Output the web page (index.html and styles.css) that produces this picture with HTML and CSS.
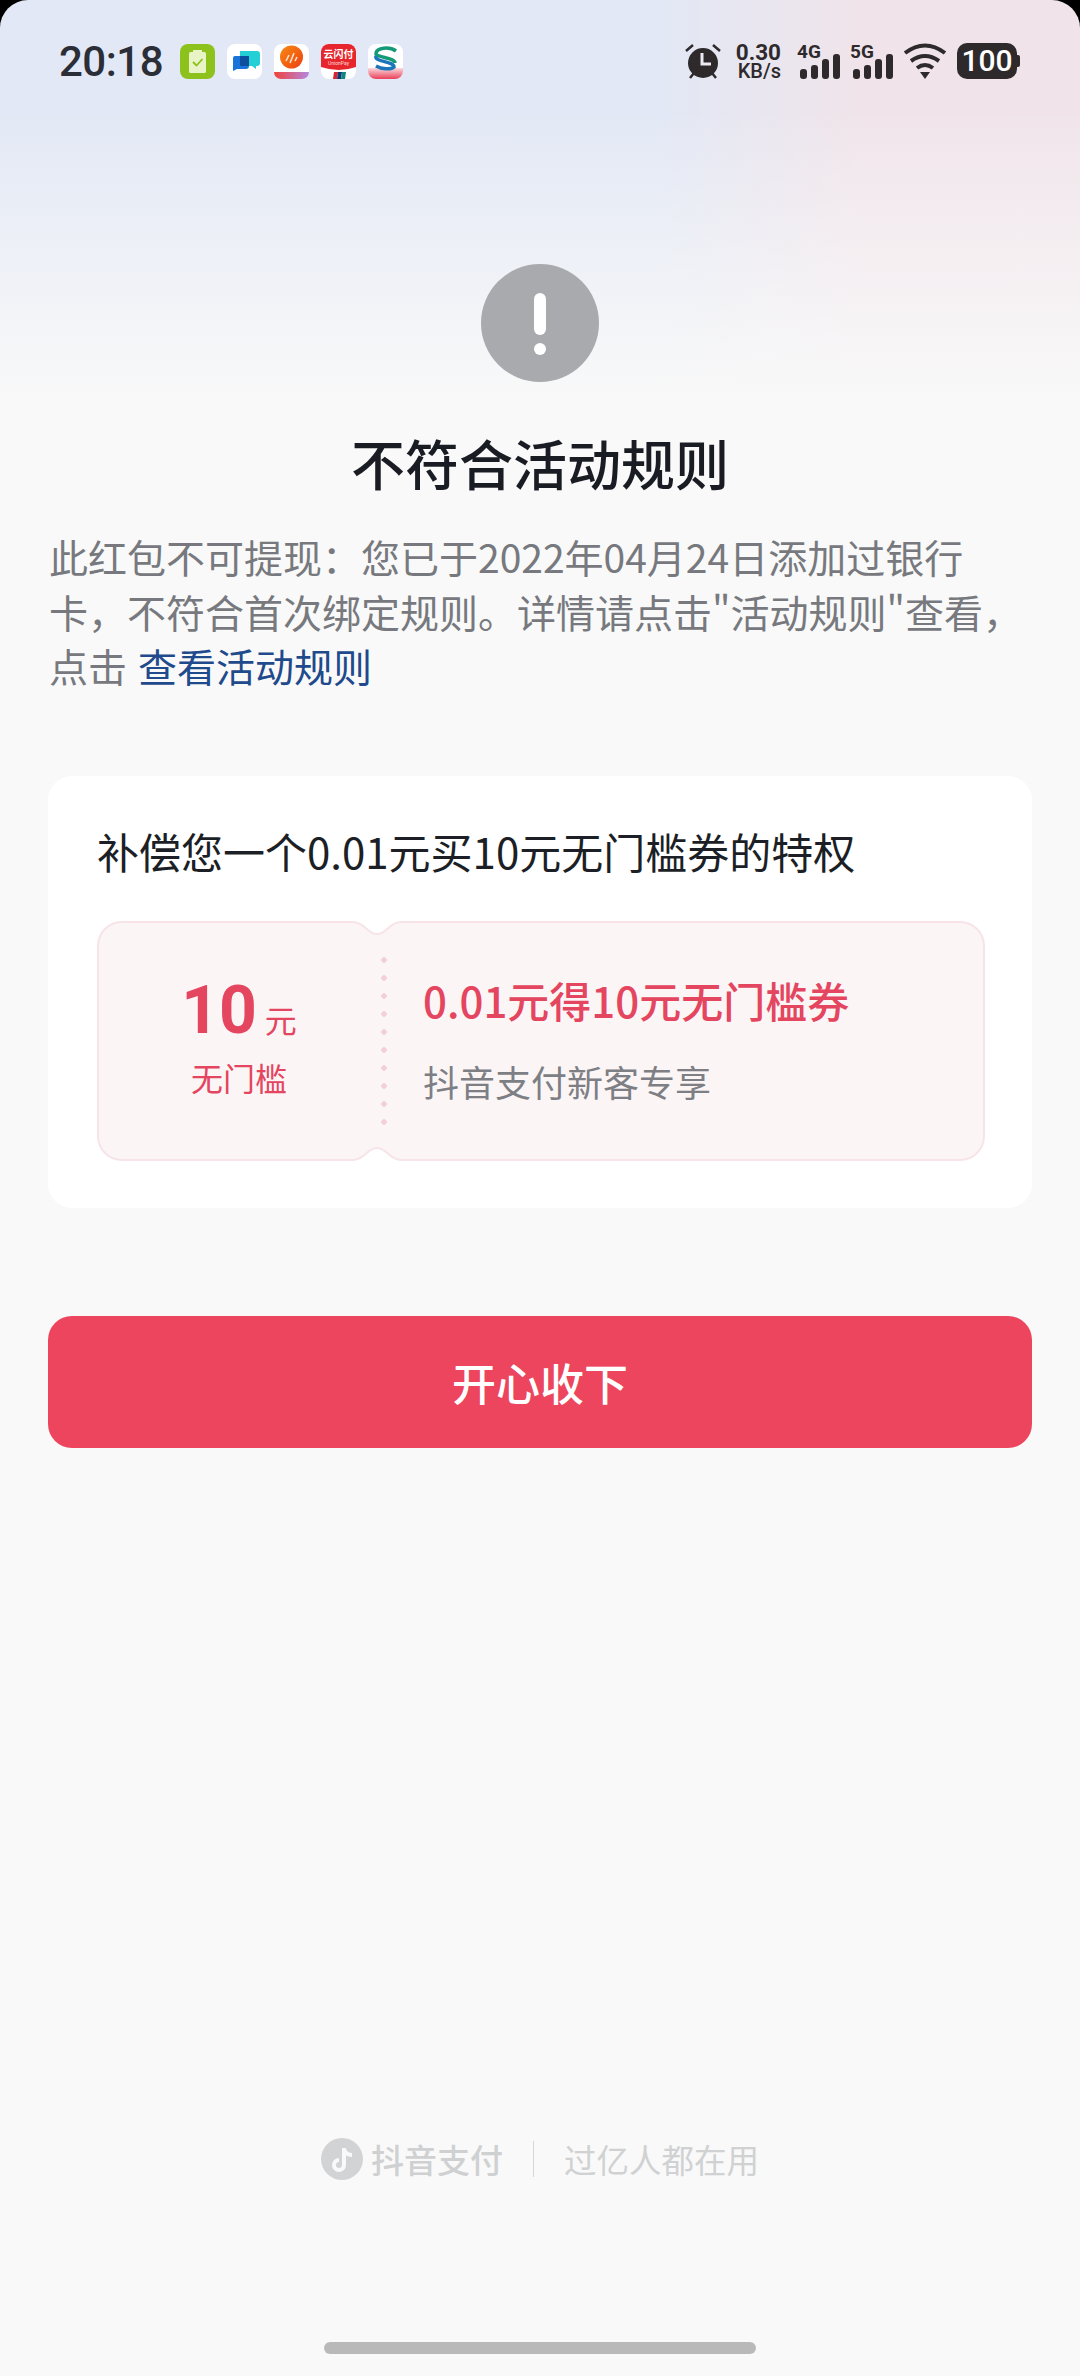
FILE: index.html
```html
<!DOCTYPE html>
<html lang="zh-CN">

<head>
    <meta charset="UTF-8">
    <meta name="viewport" content="width=device-width, initial-scale=1.0">
    <title>不符合活动规则</title>
    <link rel="stylesheet" href="styles.css">
</head>

<body>
    <div class="screen">
        <div class="status-bar">
            <div class="status-left">
                <span class="time">20:18</span>
                <div class="app-icons">
                    <svg class="app-icon" viewBox="0 0 35 35">
                        <rect width="35" height="35" rx="8" fill="#8cc21b" />
                        <rect x="9" y="8" width="17" height="21" rx="1.5" fill="#e8f3c6" />
                        <rect x="13" y="6" width="9" height="4" fill="#e8f3c6" />
                        <path d="M13 18l3.500 3.500 6-6.500" fill="none" stroke="#8cc21b" stroke-width="1.800" />
                    </svg>
                    <svg class="app-icon" viewBox="0 0 35 35">
                        <rect width="35" height="35" rx="8" fill="#fff" />
                        <path d="M13 7h17a3 3 0 0 1 3 3v9a3 3 0 0 1-3 3h-1v3l-4-3H13z" fill="#25cfd6" />
                        <path d="M8 12h14v10a3 3 0 0 1-3 3H10l-4 2V14a2 2 0 0 1 2-2z" fill="#1874d8" />
                        <rect x="13" y="12" width="9" height="10" rx="1" fill="#0d4f9e" />
                    </svg>
                    <svg class="app-icon" viewBox="0 0 35 35">
                        <defs>
                            <linearGradient id="orangeBall" x1="0" y1="0" x2="1" y2="1">
                                <stop offset="0" stop-color="#f78a12" />
                                <stop offset="1" stop-color="#ee3f12" />
                            </linearGradient>
                            <linearGradient id="purpleBand" x1="0" y1="0" x2="1" y2="0">
                                <stop offset="0" stop-color="#f0423c" />
                                <stop offset="1" stop-color="#b587e0" />
                            </linearGradient>
                        </defs>
                        <rect width="35" height="35" rx="8" fill="#fff" />
                        <circle cx="17.500" cy="13" r="11.500" fill="url(#orangeBall)" />
                        <path d="M12 17l3-6M16 19l4-10M21 17l2-4" stroke="#ffe3c8" stroke-width="1.600" />
                        <path d="M0 28h35a7 7 0 0 1-7 7H7a7 7 0 0 1-7-7z" fill="url(#purpleBand)" />
                    </svg>
                    <svg class="app-icon" viewBox="0 0 35 35">
                        <rect width="35" height="35" rx="8" fill="#fff" />
                        <path d="M0 8a8 8 0 0 1 8-8h19a8 8 0 0 1 8 8v15q-17 6-35 0z" fill="#e6262c" />
                        <text class="app-icon-text" x="17.500" y="14" text-anchor="middle">云闪付</text>
                        <text class="app-icon-small" x="17.500" y="21" text-anchor="middle">UnionPay</text>
                        <path d="M13 28h4l-1 7h-4z" fill="#d9232e" />
                        <path d="M17 28h4l-1 7h-4z" fill="#0b3a78" />
                        <path d="M21 28h4l-1 7h-4z" fill="#14857c" />
                    </svg>
                    <svg class="app-icon" viewBox="0 0 35 35">
                        <defs>
                            <linearGradient id="pinkBand" x1="0" y1="0" x2="0" y2="1">
                                <stop offset="0" stop-color="#fbd9dd" />
                                <stop offset="1" stop-color="#e9405a" />
                            </linearGradient>
                        </defs>
                        <rect width="35" height="35" rx="8" fill="#fff" />
                        <path d="M0 24h35v3a8 8 0 0 1-8 8H8a8 8 0 0 1-8-8z" fill="url(#pinkBand)" />
                        <path d="M28 7C21 2 9 4 8 9c-1 5 19 4 19 10" fill="none" stroke="#159a78" stroke-width="3.500" />
                        <path d="M8 12c-2 6 18 5 18 11-3 3-13 2-18-1" fill="none" stroke="#1b75bb" stroke-width="3.500" />
                    </svg>
                </div>
            </div>
            <div class="status-right">
                <svg class="alarm" viewBox="0 0 38 36">
                    <path d="M2 8l7-6M36 8l-7-6M6 35l4-5M32 35l-4-5" stroke="#2e2a2c" stroke-width="2.500" fill="none" />
                    <circle cx="19" cy="20" r="15" fill="#2e2a2c" />
                    <path d="M18 10v11h9" fill="none" stroke="#eceaf2" stroke-width="3" />
                </svg>
                <div class="net-speed">
                    <span class="net-speed-value">0.30</span>
                    <span class="net-speed-unit">KB/s</span>
                </div>
                <svg class="signal" viewBox="0 0 43 36">
                    <text class="signal-label" x="0" y="15">4G</text>
                    <rect x="3" y="26" width="7" height="10" rx="3" />
                    <rect x="14" y="22" width="7" height="14" rx="3" />
                    <rect x="25" y="16" width="7" height="20" rx="3" />
                    <rect x="36" y="11" width="7" height="25" rx="3" />
                </svg>
                <svg class="signal" viewBox="0 0 43 36">
                    <text class="signal-label" x="0" y="15">5G</text>
                    <rect x="3" y="26" width="7" height="10" rx="3" />
                    <rect x="14" y="22" width="7" height="14" rx="3" />
                    <rect x="25" y="16" width="7" height="20" rx="3" />
                    <rect x="36" y="11" width="7" height="25" rx="3" />
                </svg>
                <svg class="wifi" viewBox="0 0 44 36">
                    <path d="M2 10q20-15 40 0M8 18q14-10 28 0M14 25q8-6 16 0" fill="none" stroke="#2e2a2c" stroke-width="4" />
                    <path d="M17 29h10l-5 7z" fill="#2e2a2c" />
                </svg>
                <div class="battery">100</div>
            </div>
        </div>

        <svg class="alert-icon" viewBox="0 0 118 118">
            <circle cx="59" cy="59" r="59" fill="#a9aaae" />
            <rect x="53" y="29" width="12" height="42" rx="6" fill="#fff" />
            <ellipse cx="59" cy="85" rx="6" ry="6" fill="#fff" />
        </svg>

        <h1 class="title">不符合活动规则</h1>
        <p class="desc">此红包不可提现&#xFF1A;您已于2022年04月24日添加过银行<br>卡&#xFF0C;不符合首次绑定规则。详情请点击"活动规则"查看&#xFF0C;<br>点击<a class="rule-link">查看活动规则</a></p>

        <div class="card">
            <div class="card-title">补偿您一个0.01元买10元无门槛券的特权</div>
            <div class="ticket">
                <svg class="ticket-bg" viewBox="0 0 888 240" preserveAspectRatio="none">
                    <path d="M25 1H256C268 1 270 13 280 13S292 1 304 1H863a24 24 0 0 1 24 24V215a24 24 0 0 1-24 24H304C292 239 290 227 280 227S268 239 256 239H25a24 24 0 0 1-24-24V25a24 24 0 0 1 24-24z" fill="#fcf5f6" stroke="#f6e4e9" stroke-width="2" />
                </svg>
                <div class="ticket-left">
                    <div class="amount"><span class="amount-num">10</span><span class="amount-unit">元</span></div>
                    <div class="amount-label">无门槛</div>
                </div>
                <div class="ticket-dots"></div>
                <div class="ticket-right">
                    <div class="ticket-name">0.01元得10元无门槛券</div>
                    <div class="ticket-note">抖音支付新客专享</div>
                </div>
            </div>
        </div>

        <button class="accept-btn">开心收下</button>

        <div class="footer">
            <svg class="footer-logo" viewBox="0 0 42 42">
                <circle cx="21" cy="21" r="21" fill="#d2d3d4" />
                <path d="M23 10v17a5 5 0 1 1-5-5M23 11c1 4 4 6 8 6" fill="none" stroke="#f9f9f9" stroke-width="4" />
            </svg>
            <span class="footer-brand">抖音支付</span>
            <span class="footer-line"></span>
            <span class="footer-text">过亿人都在用</span>
        </div>

        <div class="home-bar"></div>
    </div>
</body>

</html>
```
FILE: styles.css
```css
* {
    box-sizing: border-box;
}

body {
    margin: 0;
    width: 1080px;
    height: 2376px;
    overflow: hidden;
    background-color: #000;
    font-family: "Noto Sans CJK SC", "Noto Sans", sans-serif;
}

.screen {
    width: 1080px;
    height: 2376px;
    display: flex;
    flex-direction: column;
    align-items: center;
    border-radius: 28px 28px 0 0;
    background-color: #f9f9f9;
    background-image:
        linear-gradient(to bottom, rgba(249, 249, 249, 0) 110px, #f9f9f9 400px),
        linear-gradient(to right, #e2e8f5 0, #e2e8f5 660px, #f0e4ea 860px, #f0e4ea 100%);
    background-size: 100% 400px;
    background-repeat: no-repeat;
}

/* status bar */
.status-bar {
    width: 100%;
    height: 36px;
    margin-top: 43px;
    padding: 0 60px 0 59px;
    display: flex;
    justify-content: space-between;
    align-items: center;
}

.status-left {
    display: flex;
    align-items: center;
}

.time {
    font-family: Roboto, sans-serif;
    font-size: 42px;
    font-weight: 500;
    letter-spacing: -0.5px;
    color: #2b2e36;
}

.app-icons {
    display: flex;
    gap: 12px;
    margin-left: 17px;
}

.app-icon {
    width: 35px;
    height: 35px;
}

.app-icon-text {
    font-size: 10px;
    font-weight: 700;
    fill: #fff;
}

.app-icon-small {
    font-family: Roboto, sans-serif;
    font-size: 5px;
    fill: #ffd9d9;
}

.status-right {
    display: flex;
    align-items: center;
}

.alarm {
    width: 38px;
    height: 36px;
}

.net-speed {
    width: 46px;
    margin-left: 13px;
    display: flex;
    flex-direction: column;
    align-items: flex-end;
    font-family: Roboto, sans-serif;
    color: #2e2a2c;
}

.net-speed-value {
    font-size: 22.500px;
    font-weight: 700;
    line-height: 20px;
}

.net-speed-unit {
    font-size: 20px;
    font-weight: 500;
    line-height: 18px;
}

.signal {
    width: 43px;
    height: 36px;
    margin-left: 16px;
    overflow: visible;
    fill: #2e2a2c;
}

.signal + .signal {
    margin-left: 10px;
}

.signal-label {
    font-family: Roboto, sans-serif;
    font-size: 19px;
    font-weight: 700;
}

.wifi {
    width: 44px;
    height: 36px;
    margin-left: 10px;
}

.battery {
    position: relative;
    width: 60px;
    height: 36px;
    margin-left: 10px;
    margin-right: 3px;
    border-radius: 10px;
    background-color: #2e2a2c;
    color: #fff;
    font-family: Roboto, sans-serif;
    font-size: 30px;
    font-weight: 500;
    line-height: 36px;
    text-align: center;
}

.battery::after {
    content: "";
    position: absolute;
    top: 12px;
    right: -3px;
    width: 3px;
    height: 12px;
    border-radius: 0 2px 2px 0;
    background-color: #2e2a2c;
}

/* result message */
.alert-icon {
    width: 118px;
    height: 118px;
    margin-top: 185px;
    flex-shrink: 0;
}

.title {
    margin: 51px 0 0;
    font-size: 54px;
    font-weight: 500;
    line-height: 60px;
    color: #1a1c23;
}

.desc {
    width: 100%;
    margin: 36px 0 0;
    padding: 0 49px;
    font-size: 39px;
    line-height: 54.500px;
    color: #77797e;
}

.rule-link {
    margin-left: 11px;
    color: #1f4a8c;
}

/* coupon card */
.card {
    width: 984px;
    height: 432px;
    margin-top: 83px;
    padding: 48px 48px 0 49px;
    border-radius: 24px;
    background-color: #fff;
}

.card-title {
    font-size: 42px;
    line-height: 54px;
    color: #1c1f26;
}

.ticket {
    position: relative;
    width: 888px;
    height: 240px;
    margin-top: 43px;
    display: flex;
    align-items: center;
}

.ticket-bg {
    position: absolute;
    top: 0;
    left: 0;
    width: 100%;
    height: 100%;
}

.ticket-left {
    position: relative;
    width: 284px;
    padding-bottom: 4px;
    text-align: center;
    color: #e4455f;
}

.amount {
    line-height: 62px;
}

.amount-num {
    font-family: Roboto, sans-serif;
    font-size: 66px;
    font-weight: 700;
}

.amount-unit {
    margin-left: 8px;
    font-size: 32px;
}

.amount-label {
    font-size: 32px;
    line-height: 40px;
}

.ticket-dots {
    position: relative;
    width: 6px;
    height: 180px;
    background-image: radial-gradient(circle, #f2d0db 2.500px, transparent 3px);
    background-size: 6px 18px;
}

.ticket-right {
    position: relative;
    margin-left: 36px;
    padding-bottom: 3px;
}

.ticket-name {
    font-size: 42px;
    font-weight: 500;
    line-height: 54px;
    color: #e4455f;
}

.ticket-note {
    margin-top: 30px;
    font-size: 36px;
    line-height: 48px;
    color: #7d7f85;
}

/* button */
.accept-btn {
    width: 984px;
    height: 132px;
    margin-top: 108px;
    border: none;
    border-radius: 24px;
    background-color: #ec455d;
    color: #fff;
    font-family: inherit;
    font-size: 44px;
    font-weight: 500;
    flex-shrink: 0;
}

/* footer */
.footer {
    height: 42px;
    margin-top: 690px;
    display: flex;
    align-items: center;
}

.footer-logo {
    width: 42px;
    height: 42px;
}

.footer-brand {
    margin-left: 8px;
    font-size: 33px;
    font-weight: 500;
    color: #cfd0d1;
}

.footer-line {
    width: 1px;
    height: 36px;
    margin: 0 30px;
    background-color: #d6d6d7;
}

.footer-text {
    font-size: 32.500px;
    color: #d0d1d2;
}

.home-bar {
    width: 432px;
    height: 12px;
    margin-top: 162px;
    border-radius: 6px;
    background-color: #b9b9b9;
    flex-shrink: 0;
}
```
